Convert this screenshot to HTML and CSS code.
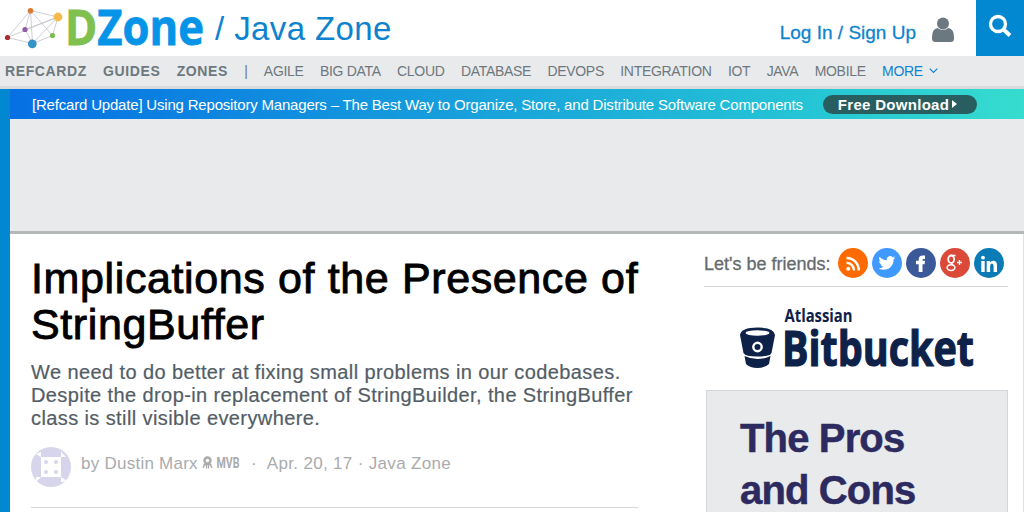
FILE: index.html
```
<!DOCTYPE html>
<html lang="en">
<head>
    <meta charset="UTF-8">
    <meta name="viewport" content="width=device-width, initial-scale=1.0">
    <title>Implications of the Presence of StringBuffer - DZone Java</title>
    <link rel="stylesheet" href="styles.css">
</head>
<body>
    <header class="header">
        <a class="logo" href="#">
            <svg width="210" height="56" viewBox="0 0 210 56">
                <g stroke="#c3c3cc" stroke-width="0.8" fill="none">
                    <path d="M7.5 37.5L30.5 10.5L58 17L32.5 43.5ZM7.5 37.5L58 17L25 29.5L30.5 10.5L32.5 43.5L25 29.5M30.5 10.5L52.5 35.5L58 17M52.5 35.5L32.5 43.5"/>
                </g>
                <circle cx="30.5" cy="10.8" r="2.8" fill="#dc7a35"/>
                <circle cx="58" cy="17" r="4.4" fill="#f5b94c"/>
                <circle cx="25" cy="29.5" r="2.6" fill="#8d5ba6"/>
                <circle cx="7.5" cy="37.5" r="2.6" fill="#ab2b30"/>
                <circle cx="52.5" cy="35.5" r="2.6" fill="#7cbc4c"/>
                <circle cx="32.3" cy="43.8" r="4.4" fill="#3793c6"/>
                <text class="logo-text" y="44.5" textLength="139" lengthAdjust="spacingAndGlyphs" x="65"><tspan class="logo-d">D</tspan><tspan class="logo-zone">Zone</tspan></text>
            </svg>
        </a>
        <a class="portal" href="#">/ Java Zone</a>
        <a class="login" href="#">Log In / Sign Up</a>
        <svg class="user-icon" width="24" height="26" viewBox="0 0 24 26">
            <circle cx="11" cy="6.500" r="6"/>
            <path d="M5.500 11Q11 15 16.500 11Q22 12 22 20V21.500Q22 25 18.500 25H3.500Q0 25 0 21.500V20Q0 12 5.500 11Z"/>
        </svg>
        <button class="search" type="button" aria-label="Search">
            <svg width="24" height="24" viewBox="0 0 24 24" fill="none" stroke="#fff">
                <circle cx="10" cy="10" r="7.5" stroke-width="3.300"/>
                <path d="M15.500 15.500L22 21.500" stroke-width="4"/>
            </svg>
        </button>
    </header>

    <nav class="nav">
        <a class="strong" href="#">REFCARDZ</a>
        <a class="strong" href="#">GUIDES</a>
        <a class="strong" href="#">ZONES</a>
        <span class="divider">|</span>
        <a href="#">AGILE</a>
        <a href="#">BIG DATA</a>
        <a href="#">CLOUD</a>
        <a href="#">DATABASE</a>
        <a href="#">DEVOPS</a>
        <a href="#">INTEGRATION</a>
        <a href="#">IOT</a>
        <a href="#">JAVA</a>
        <a href="#">MOBILE</a>
        <a class="more" href="#">MORE
            <svg width="9" height="6" viewBox="0 0 9 6"><path d="M0.700 0.700L4.500 4.500L8.300 0.700" fill="none" stroke="#0e83cd" stroke-width="1.200"/></svg>
        </a>
    </nav>

    <div class="page">
        <div class="banner">
            <span class="banner-text">[Refcard Update] Using Repository Managers – The Best Way to Organize, Store, and Distribute Software Components</span>
            <a class="download" href="#">Free Download
                <svg width="5" height="8" viewBox="0 0 5 8"><path d="M0 0L5 4L0 8Z" fill="#fff"/></svg>
            </a>
        </div>
        <div class="ad-space"></div>

        <div class="content">
            <main class="article">
                <h1>Implications of the Presence of StringBuffer</h1>
                <p class="subtitle">We need to do better at fixing small problems in our codebases. Despite the drop-in replacement of StringBuilder, the StringBuffer class is still visible everywhere.</p>
                <div class="meta">
                    <svg class="avatar" width="40" height="40" viewBox="0 0 40 40">
                        <circle cx="20" cy="20" r="20" fill="#d7d5eb"/>
                        <path d="M10 10H30V30H10ZM10 10L5 7L10 5ZM30 10V5L35 10ZM30 30L36 34L30 35ZM10 30L5 35V30Z" fill="#fff"/>
                        <g fill="#d7d5eb">
                            <circle cx="15" cy="15" r="2"/>
                            <circle cx="25" cy="15" r="2"/>
                            <circle cx="15" cy="25" r="2"/>
                            <circle cx="25" cy="25" r="2"/>
                        </g>
                    </svg>
                    <span class="author">by Dustin Marx</span>
                    <svg class="mvb" width="39" height="14" viewBox="0 0 39 14">
                        <circle cx="5.500" cy="4.500" r="3" fill="none" stroke="#aaa" stroke-width="2.400"/>
                        <path d="M3.500 7L1 12M7.500 7L10 12M4.500 8V12.500M6.500 8V12.500M1.500 8.500H9.500" stroke="#aaa" stroke-width="1.300"/>
                        <text x="14.500" y="12" textLength="23" lengthAdjust="spacingAndGlyphs">MVB</text>
                    </svg>
                    <span class="dot">·</span>
                    <span class="date">Apr. 20, 17 · Java Zone</span>
                </div>
            </main>

            <aside class="sidebar">
                <div class="friends">
                    <span class="friends-label">Let's be friends:</span>
                    <a class="social rss" href="#" aria-label="RSS">
                        <svg width="30" height="30" viewBox="0 0 30 30" fill="none" stroke="#fff" stroke-width="2.400">
                            <circle cx="10.300" cy="20.700" r="2" fill="#fff" stroke="none"/>
                            <path d="M8.500 14.800A7.500 7.500 0 0 1 16 22.500M8.500 10A12 12 0 0 1 20.700 22.500"/>
                        </svg>
                    </a>
                    <a class="social twitter" href="#" aria-label="Twitter">
                        <svg width="30" height="30" viewBox="0 0 30 30">
                            <path transform="translate(6.500 6.500) scale(.7)" d="M23.950 4.570a10 10 0 0 1-2.820.770 4.960 4.960 0 0 0 2.160-2.720c-.950.550-2 .950-3.130 1.180a4.920 4.920 0 0 0-8.380 4.480C7.690 8.090 4.070 6.130 1.640 3.160a4.820 4.820 0 0 0-.670 2.470c0 1.710.870 3.210 2.190 4.100a4.900 4.900 0 0 1-2.230-.620v.060a4.920 4.920 0 0 0 3.950 4.830 5 5 0 0 1-2.210.080 4.940 4.940 0 0 0 4.600 3.420A9.870 9.870 0 0 1 0 19.540a14 14 0 0 0 7.550 2.210c9.050 0 14-7.500 14-13.980l-.020-.630a9.940 9.940 0 0 0 2.420-2.570z" fill="#fff"/>
                        </svg>
                    </a>
                    <a class="social facebook" href="#" aria-label="Facebook">
                        <svg width="30" height="30" viewBox="0 0 30 30">
                            <path d="M12.700 24V16.300H10V12.700H12.700V11.500Q12.700 7.500 16.800 7.500H19V11H17.500Q16.500 11 16.500 12.200V12.700H19L18.600 16.300H16.500V24Z" fill="#fff"/>
                        </svg>
                    </a>
                    <a class="social google" href="#" aria-label="Google+">
                        <svg width="30" height="30" viewBox="0 0 30 30" fill="none" stroke="#fff">
                            <ellipse cx="11.200" cy="11.200" rx="3" ry="3.700" stroke-width="1.800"/>
                            <path d="M10.500 7.500H15.500M12 15Q11.200 16 13.500 17.500" stroke-width="1.300"/>
                            <ellipse cx="11" cy="19.600" rx="3.900" ry="2.900" stroke-width="1.500"/>
                            <path d="M17 14.500H22M19.500 12V17" stroke-width="1.300"/>
                        </svg>
                    </a>
                    <a class="social linkedin" href="#" aria-label="LinkedIn">
                        <svg width="30" height="30" viewBox="0 0 30 30" fill="#fff">
                            <circle cx="9" cy="9.700" r="1.900"/>
                            <path d="M7.300 13H10.700V24H7.300ZM12.700 13H16V14.500Q17 12.700 19.300 12.700Q23 12.700 23 17.300V24H19.600V18Q19.600 15.500 17.900 15.500Q16.100 15.500 16.100 18V24H12.700Z"/>
                        </svg>
                    </a>
                </div>

                <svg class="bitbucket" width="304" height="103" viewBox="0 0 304 103">
                    <path d="M36 48Q37 40.500 53.500 40.500Q70 40.500 71 48L67.500 66Q66 69.500 53.500 69.500Q41 69.500 39.500 66Z" fill="#0d2149"/>
                    <ellipse cx="53.500" cy="46" rx="12" ry="2.700" fill="#fff"/>
                    <circle cx="53.500" cy="60" r="4.200" fill="#0d2149" stroke="#fff" stroke-width="2.400"/>
                    <path d="M40.500 69Q53.500 75 66.500 69L65 77Q61 81 53.500 81Q46 81 42 77Z" fill="#0d2149"/>
                    <text class="atlassian" x="80.500" y="34.500" textLength="68" lengthAdjust="spacingAndGlyphs">Atlassian</text>
                    <text class="bitbucket-name" x="78" y="79" textLength="192" lengthAdjust="spacingAndGlyphs">Bitbucket</text>
                </svg>

                <div class="promo">The Pros<br>and Cons</div>
            </aside>
        </div>
    </div>
</body>
</html>
```
FILE: styles.css
```
* {
    box-sizing: border-box;
}

body {
    margin: 0;
    height: 512px;
    overflow: hidden;
    font-family: "Liberation Sans", Arial, sans-serif;
    background-color: #fff;
    color: #000;
}

a {
    color: #0e83cd;
    text-decoration: none;
}

svg {
    display: block;
    flex-shrink: 0;
    overflow: visible;
}

.header {
    display: flex;
    align-items: center;
    height: 56px;
}

.logo-text {
    font-family: "Open Sans", sans-serif;
    font-weight: 700;
    font-size: 49px;
    stroke-width: 0.8px;
}

.logo-d {
    fill: #80c04f;
    stroke: #80c04f;
}

.logo-zone {
    fill: #0594e8;
    stroke: #0594e8;
}

.portal {
    margin-left: 5px;
    padding-top: 2px;
    font-size: 33px;
    letter-spacing: 0.4px;
}

.login {
    margin-left: auto;
    padding-top: 9px;
    font-size: 19px;
    -webkit-text-stroke: 0.3px #0e83cd;
}

.user-icon {
    margin: 4px 20px 0 16px;
    fill: #6c787f;
}

.search {
    display: flex;
    width: 48px;
    height: 56px;
    padding: 14px 0 0 12px;
    border: none;
    background-color: #0288d1;
}

.nav {
    display: flex;
    gap: 16.3px;
    height: 33px;
    padding-left: 5px;
    border-bottom: 3px solid #d8dadb;
    background-color: #e8eaec;
    font-size: 14px;
    line-height: 30px;
    letter-spacing: -0.3px;
    white-space: nowrap;
}

.nav a,
.divider {
    color: #6d787e;
}

.nav .strong {
    font-weight: 700;
    letter-spacing: 0.6px;
}

.nav .more {
    display: flex;
    align-items: center;
    gap: 6px;
    color: #0e83cd;
}

.page {
    height: 423px;
    border-left: 10px solid #0288d1;
}

.banner {
    display: flex;
    align-items: center;
    height: 30px;
    padding-left: 22px;
    background: linear-gradient(to right, #0670e4, #159bdc 40%, #26c6d5 80%, #36dccf);
    color: #fff;
    white-space: nowrap;
}

.banner-text {
    font-size: 15px;
    letter-spacing: -0.19px;
}

.download {
    display: flex;
    align-items: center;
    gap: 3px;
    width: 154px;
    height: 19px;
    margin-left: 20px;
    padding-left: 15px;
    border-radius: 10px;
    background-color: #285e60;
    color: #fff;
    font-size: 15px;
    font-weight: 700;
    letter-spacing: 0.3px;
}

.ad-space {
    height: 115px;
    border-bottom: 3px solid #b4b7b8;
    background-color: #e8eaec;
}

.content {
    display: flex;
    height: 278px;
    border-right: 1px solid #dfe2e5;
}

.article {
    width: 628px;
    padding: 21px 0 0 21px;
}

h1 {
    margin: 0 -8px 0 0;
    font-size: 43px;
    font-weight: 400;
    line-height: 46px;
    letter-spacing: 0.62px;
    -webkit-text-stroke: 0.9px #000;
}

.subtitle {
    margin: 14px -8px 0 0;
    color: #535d66;
    font-size: 20px;
    line-height: 23px;
    letter-spacing: 0.4px;
    -webkit-text-stroke: 0.2px #535d66;
}

.meta {
    display: flex;
    height: 61px;
    margin-top: 17px;
    border-bottom: 1px solid #d5d8da;
    color: #a9abad;
    font-size: 17px;
    line-height: 34px;
    letter-spacing: 0.25px;
    white-space: nowrap;
}

.author {
    margin-left: 10px;
}

.mvb {
    margin: 9px 0 0 4px;
}

.mvb text {
    fill: #aaa;
    font-family: Roboto, sans-serif;
    font-size: 14px;
    font-weight: 700;
    letter-spacing: 0;
}

.dot {
    margin: 0 10px 0 10px;
}

.date {
    letter-spacing: 0.33px;
}

.sidebar {
    width: 304px;
    margin-left: 66px;
}

.friends {
    display: flex;
    align-items: center;
    gap: 4px;
    height: 53px;
    padding-top: 6px;
    border-bottom: 1px solid #d3d7da;
}

.friends-label {
    width: 130px;
    padding-top: 2px;
    color: #666a6d;
    font-size: 18px;
    white-space: nowrap;
    -webkit-text-stroke: 0.3px #666a6d;
}

.social {
    width: 30px;
    height: 30px;
    border-radius: 50%;
}

.rss {
    background-color: #ff6a00;
}

.twitter {
    background-color: #4099ff;
}

.facebook {
    background-color: #3b5998;
}

.google {
    background-color: #db4a39;
}

.linkedin {
    background-color: #0a7bb5;
}

.bitbucket text {
    fill: #0d2149;
    font-family: "Open Sans", sans-serif;
    font-weight: 700;
}

.bitbucket .atlassian {
    font-size: 18px;
}

.bitbucket .bitbucket-name {
    font-size: 48px;
    stroke: #0d2149;
    stroke-width: 1.2px;
}

.promo {
    height: 250px;
    margin-left: 2px;
    padding: 21px 0 0 33px;
    border: 1px solid #d4d7d9;
    background-color: #e8eaec;
    color: #2d2a5f;
    font-size: 40px;
    font-weight: 700;
    line-height: 52px;
    letter-spacing: -0.85px;
    -webkit-text-stroke: 0.5px #2d2a5f;
}
```
